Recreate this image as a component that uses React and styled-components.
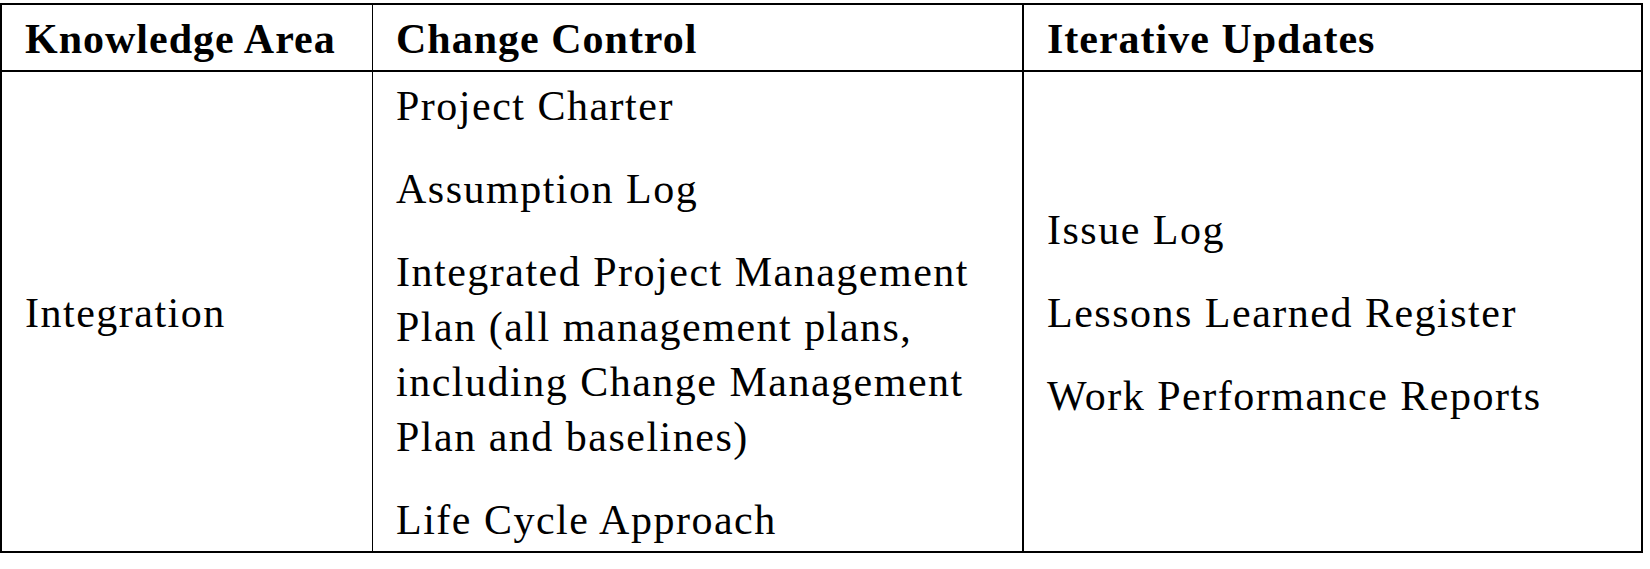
import React from "react";
import styled, { createGlobalStyle } from "styled-components";

const GlobalStyle = createGlobalStyle`
  html, body {
    margin: 0;
    padding: 0;
    background: #ffffff;
  }
  body {
    font-family: "Liberation Serif", "Times New Roman", serif;
    color: #000000;
  }
`;

const Table = styled.div`
  box-sizing: border-box;
  display: grid;
  grid-template-columns: 370px 650px 1fr;
  width: 1643px;
  margin-top: 3px;
  border: 2px solid #000;
`;

const HeadCell = styled.div`
  box-sizing: border-box;
  padding: 7px 22px 3px 23px;
  border-bottom: 2px solid #000;
  border-left: ${(p) => (p.$divider ? `${p.$divider}px solid #000` : "none")};
  font-size: 42px;
  line-height: 55px;
  font-weight: 700;
  letter-spacing: 1px;
  white-space: nowrap;
`;

const Cell = styled.div`
  box-sizing: border-box;
  display: flex;
  flex-direction: column;
  justify-content: ${(p) => (p.$center ? "center" : "flex-start")};
  gap: 28px;
  padding: 7px 22px 3px 23px;
  border-left: ${(p) => (p.$divider ? `${p.$divider}px solid #000` : "none")};
`;

const Para = styled.p`
  margin: 0;
  font-size: 42px;
  line-height: 55px;
  letter-spacing: 1.5px;
`;

const changeControl = [
  "Project Charter",
  "Assumption Log",
  "Integrated Project Management Plan (all management plans, including Change Management Plan and baselines)",
  "Life Cycle Approach",
];

const iterativeUpdates = [
  "Issue Log",
  "Lessons Learned Register",
  "Work Performance Reports",
];

export default function App() {
  return (
    <>
      <GlobalStyle />
      <Table>
        <HeadCell>Knowledge Area</HeadCell>
        <HeadCell $divider={1.5}>Change Control</HeadCell>
        <HeadCell $divider={2}>Iterative Updates</HeadCell>

        <Cell $center>
          <Para>Integration</Para>
        </Cell>
        <Cell $divider={1.5}>
          {changeControl.map((t) => (
            <Para key={t}>{t}</Para>
          ))}
        </Cell>
        <Cell $center $divider={2}>
          {iterativeUpdates.map((t) => (
            <Para key={t}>{t}</Para>
          ))}
        </Cell>
      </Table>
    </>
  );
}
